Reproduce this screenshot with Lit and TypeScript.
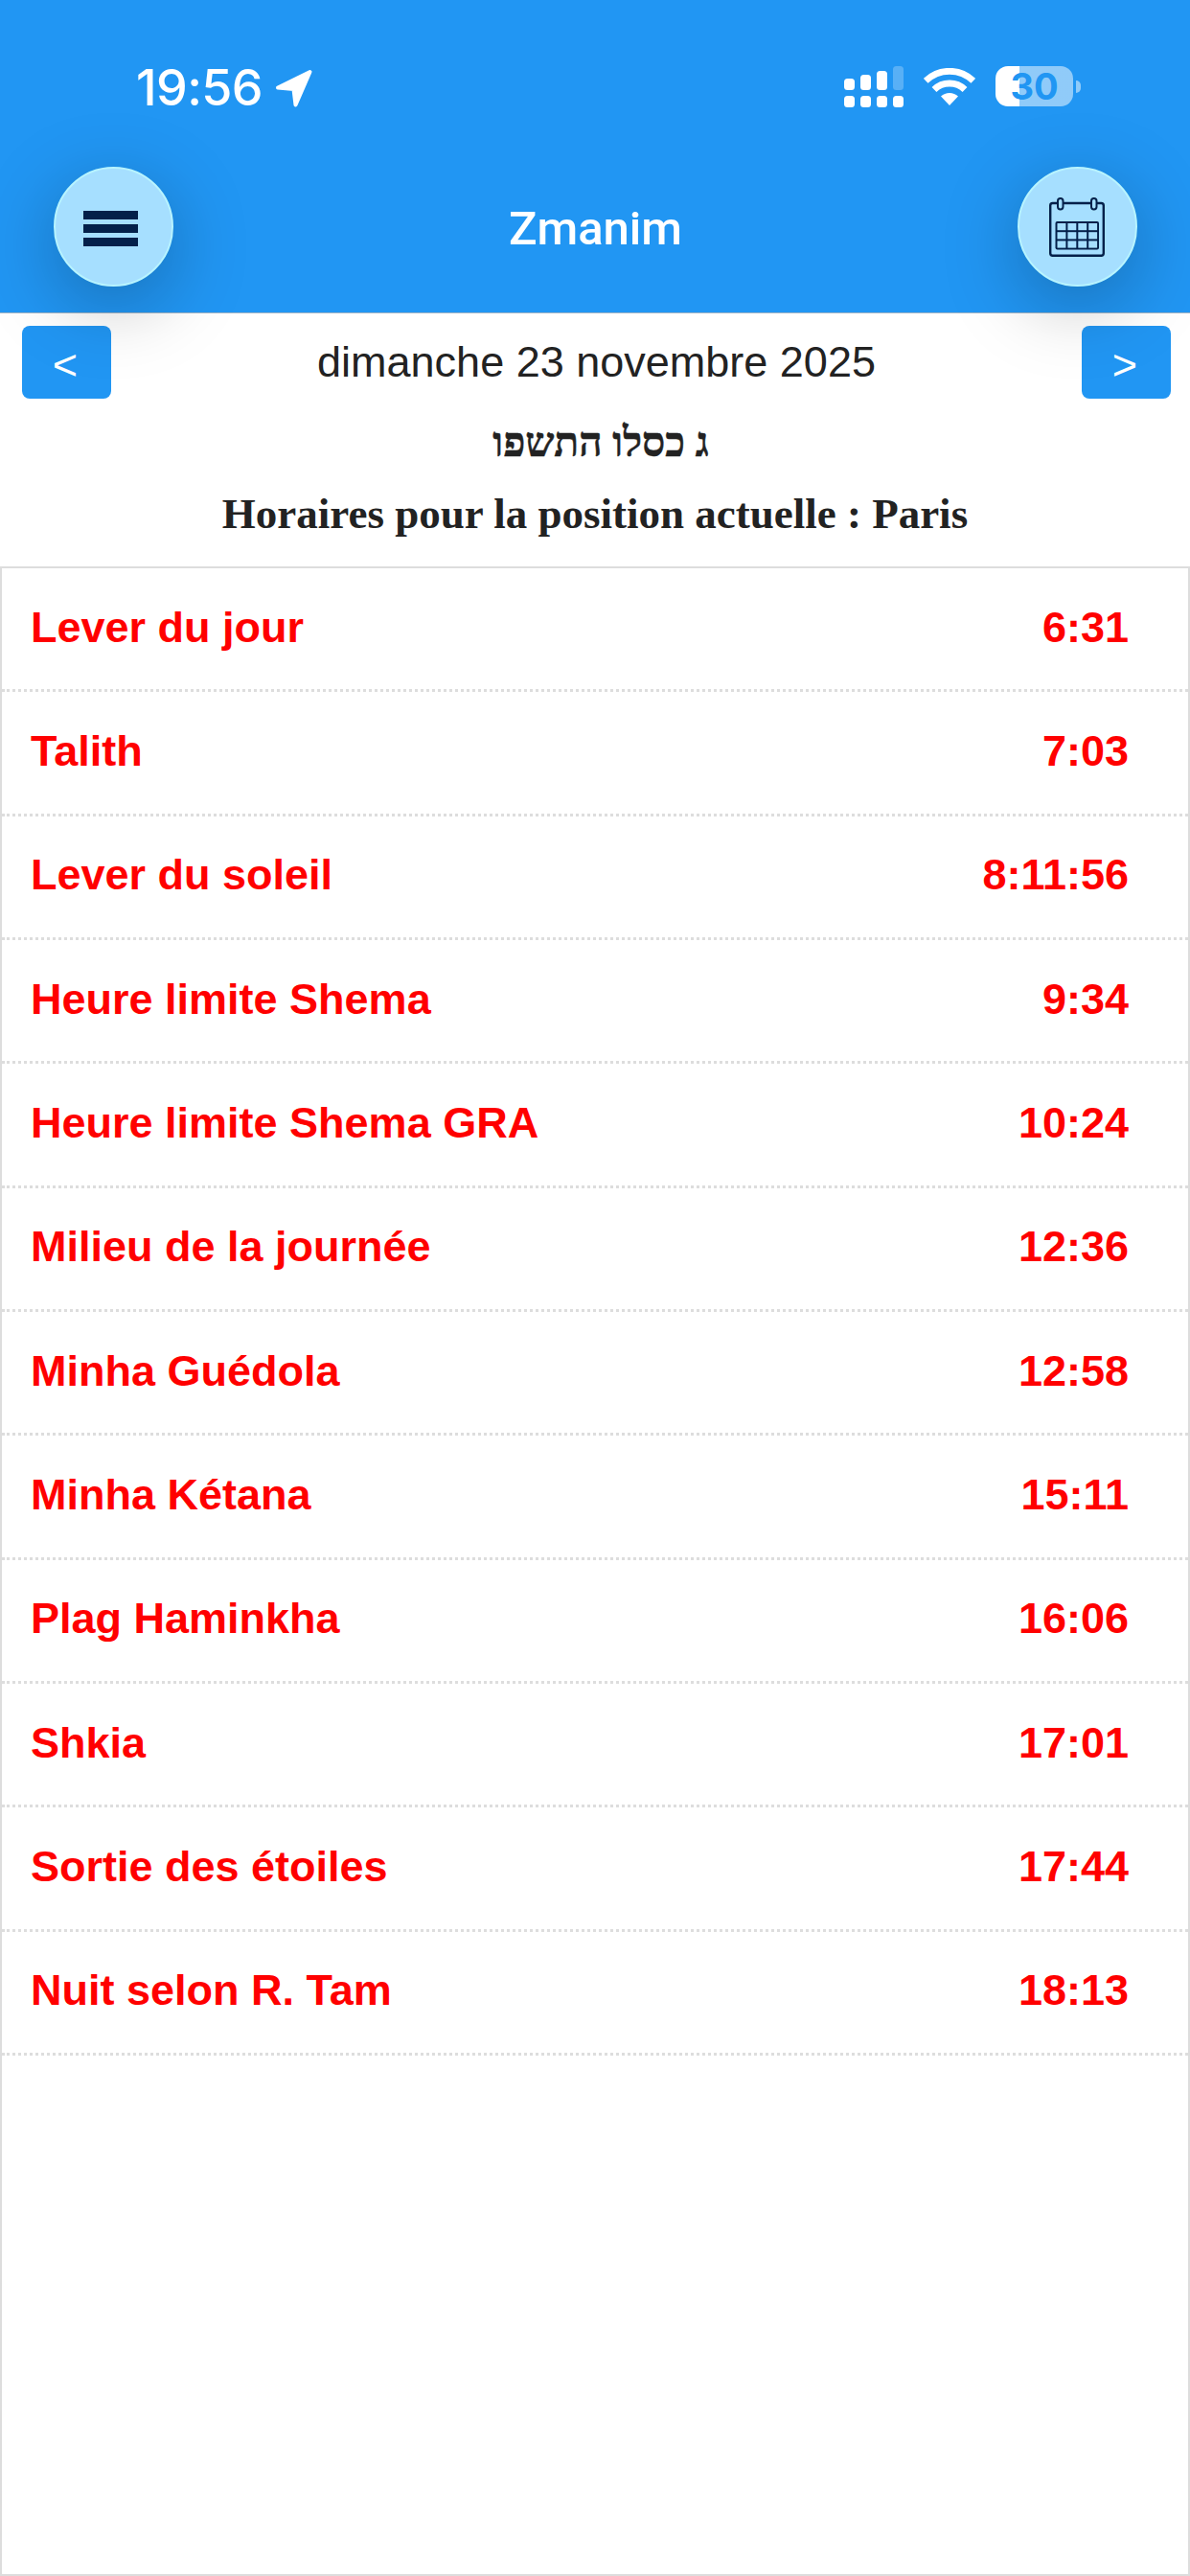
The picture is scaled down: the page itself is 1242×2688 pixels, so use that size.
import { LitElement, css, html, svg } from "lit";
import { customElement } from "lit/decorators.js";

const ZMANIM: [string, string][] = [
  ["Lever du jour", "6:31"],
  ["Talith", "7:03"],
  ["Lever du soleil", "8:11:56"],
  ["Heure limite Shema", "9:34"],
  ["Heure limite Shema GRA", "10:24"],
  ["Milieu de la journée", "12:36"],
  ["Minha Guédola", "12:58"],
  ["Minha Kétana", "15:11"],
  ["Plag Haminkha", "16:06"],
  ["Shkia", "17:01"],
  ["Sortie des étoiles", "17:44"],
  ["Nuit selon R. Tam", "18:13"],
];

@customElement("app-root")
export class AppRoot extends LitElement {
  protected render() {
    return html`
      <div class="page">
        <header class="header">
          <div class="status">
            <div class="status-left">
              <span class="clock">19:56</span>
              ${this._locationIcon()}
            </div>
            <div class="status-right">
              ${this._signalIcon()} ${this._wifiIcon()}
              <div class="battery">
                <div class="battery-body">30</div>
                <div class="battery-tip"></div>
              </div>
            </div>
          </div>
          <div class="toolbar">
            <button class="fab">
              <span class="burger"><i></i><i></i><i></i></span>
            </button>
            <div class="title">Zmanim</div>
            <button class="fab">${this._calendarIcon()}</button>
          </div>
        </header>

        <div class="date-row">
          <button class="nav">&lt;</button>
          <div class="date">dimanche 23 novembre 2025</div>
          <button class="nav">&gt;</button>
        </div>
        <div class="hebrew" dir="rtl">ג כסלו התשפו</div>
        <div class="place">Horaires pour la position actuelle : Paris</div>

        <div class="card">
          ${ZMANIM.map(
            ([name, time]) => html`
              <div class="row">
                <span>${name}</span>
                <span>${time}</span>
              </div>
            `,
          )}
        </div>
      </div>
    `;
  }

  private _locationIcon() {
    return html`<svg class="location" width="40" height="40" viewBox="0 0 40 40">
      <path
        d="M36.5 3 L3 19.5 L19.5 21 L21.5 37.5 Z"
        fill="#fff"
        stroke="#fff"
        stroke-width="4"
        stroke-linejoin="round"
      />
    </svg>`;
  }

  private _signalIcon() {
    const bars = [
      [0, 13, 12, 1],
      [17, 9, 16, 1],
      [34, 5, 20, 1],
      [51, 0, 25, 0.25],
    ];
    return html`<svg width="62" height="43" viewBox="0 0 62 43" fill="#fff">
      ${bars.map(
        ([x, y, h, o]) =>
          svg`<rect x=${x} y=${y} width="11" height=${h} rx="3.5" opacity=${o} />
            <rect x=${x} y="31" width="11" height="12" rx="3.5" />`,
      )}
    </svg>`;
  }

  private _wifiIcon() {
    return html`<svg class="wifi" width="54" height="39" viewBox="0 0 54 39" fill="none">
      <path d="M2.2 13.3 A35.7 35.7 0 0 1 51.8 13.3" stroke="#fff" stroke-width="6.8" />
      <path d="M11 22.5 A23 23 0 0 1 43 22.5" stroke="#fff" stroke-width="7" />
      <path d="M27 39 L18 29.6 A13 13 0 0 1 36 29.6 Z" fill="#fff" />
    </svg>`;
  }

  private _calendarIcon() {
    const cells = [];
    for (let r = 0; r < 3; r++) {
      for (let c = 0; c < 4; c++) {
        cells.push(svg`<rect x=${8.5 + c * 10.9} y=${27 + r * 9.2} width="8.9" height="7.2" fill="#a6dfff" />`);
      }
    }
    return html`<svg class="calendar" width="58" height="62" viewBox="0 0 58 62">
      <rect x="1.2" y="6" width="55.6" height="54.8" rx="2.5" fill="none" stroke="#04204a" stroke-width="2.4" />
      <rect x="6.5" y="25" width="45.5" height="29.5" rx="2" fill="#04204a" />
      ${cells}
      <rect x="9" y="1" width="5.5" height="11.5" rx="2.7" fill="#a6dfff" stroke="#04204a" stroke-width="2" />
      <rect x="44" y="1" width="5.5" height="11.5" rx="2.7" fill="#a6dfff" stroke="#04204a" stroke-width="2" />
    </svg>`;
  }

  static styles = css`
    :host {
      display: block;
      font-family: "Liberation Sans", Arial, sans-serif;
    }

    .page {
      display: flex;
      flex-direction: column;
      height: 2688px;
      background: #fff;
      overflow: hidden;
    }

    .header {
      position: relative;
      z-index: 2;
      box-sizing: border-box;
      height: 327px;
      flex: none;
      background: #2196f3;
      border-bottom: 1px solid #9fb4c6;
      display: flex;
      flex-direction: column;
      color: #fff;
    }

    .status {
      display: flex;
      justify-content: space-between;
      align-items: flex-start;
      height: 174px;
      box-sizing: border-box;
      padding: 69px 114px 0 142px;
    }

    .status-left {
      display: flex;
      align-items: flex-start;
      gap: 13px;
    }

    .clock {
      font-family: Inter, "Liberation Sans", sans-serif;
      font-size: 52px;
      font-weight: 500;
      line-height: 46px;
      letter-spacing: -0.6px;
    }

    .location {
      margin-top: 3px;
    }

    .status-right {
      display: flex;
      align-items: flex-start;
      gap: 21px;
    }

    .wifi {
      margin-top: 2px;
    }

    .battery {
      display: flex;
      align-items: center;
      gap: 3px;
    }

    .battery-body {
      width: 81px;
      height: 42px;
      border-radius: 13px;
      background: linear-gradient(to right, #fff 25px, rgba(255, 255, 255, 0.5) 25px);
      font-family: Inter, "Liberation Sans", sans-serif;
      font-size: 38px;
      font-weight: 700;
      line-height: 42px;
      text-align: center;
      color: #2196f3;
    }

    .battery-tip {
      width: 5px;
      height: 13px;
      border-radius: 0 5px 5px 0;
      background: rgba(255, 255, 255, 0.5);
    }

    .toolbar {
      display: flex;
      justify-content: space-between;
      align-items: flex-start;
      padding: 0 55px 0 56px;
    }

    .fab {
      box-sizing: border-box;
      width: 125px;
      height: 125px;
      padding: 0;
      flex: none;
      border: 2px solid #b8f4ff;
      border-radius: 50%;
      background: #a6dfff;
      box-shadow: 0 20px 80px rgba(0, 0, 0, 0.26);
      display: flex;
      align-items: center;
      justify-content: center;
    }

    .burger {
      display: flex;
      flex-direction: column;
      gap: 5px;
      margin: 3px 6px 0 0;
    }

    .burger i {
      display: block;
      width: 57px;
      height: 9px;
      background: #04204a;
    }

    .calendar {
      margin-top: 1px;
    }

    .title {
      font-family: Roboto, "Liberation Sans", sans-serif;
      font-size: 49px;
      font-weight: 500;
      line-height: 125px;
      margin-top: 2px;
    }

    .date-row {
      display: flex;
      justify-content: space-between;
      align-items: flex-start;
      padding: 13px 20px 0 23px;
    }

    .nav {
      width: 93px;
      height: 76px;
      padding: 5px 3px 0 0;
      border: none;
      border-radius: 8px;
      background: #2196f3;
      color: #fff;
      font-family: "Liberation Sans", sans-serif;
      font-size: 45px;
    }

    .date {
      font-size: 45px;
      line-height: 76px;
      color: #222;
    }

    .hebrew,
    .place {
      font-family: "Liberation Serif", "Times New Roman", serif;
      font-weight: 700;
      text-align: center;
      color: #222;
    }

    .hebrew {
      font-size: 42.5px;
      line-height: 46px;
      margin-top: 23px;
      padding-left: 12px;
      -webkit-text-stroke: 0.5px #222;
    }

    .place {
      font-size: 45px;
      line-height: 50px;
      margin-top: 26px;
    }

    .card {
      flex: 1;
      margin-top: 30px;
      border: 2px solid #ddd;
    }

    .row {
      box-sizing: border-box;
      height: 129.33px;
      display: flex;
      justify-content: space-between;
      align-items: center;
      padding: 0 62px 3px 30px;
      border-bottom: 3px dotted #ddd;
      color: #f00;
      font-size: 45px;
      font-weight: 700;
    }
  `;
}
